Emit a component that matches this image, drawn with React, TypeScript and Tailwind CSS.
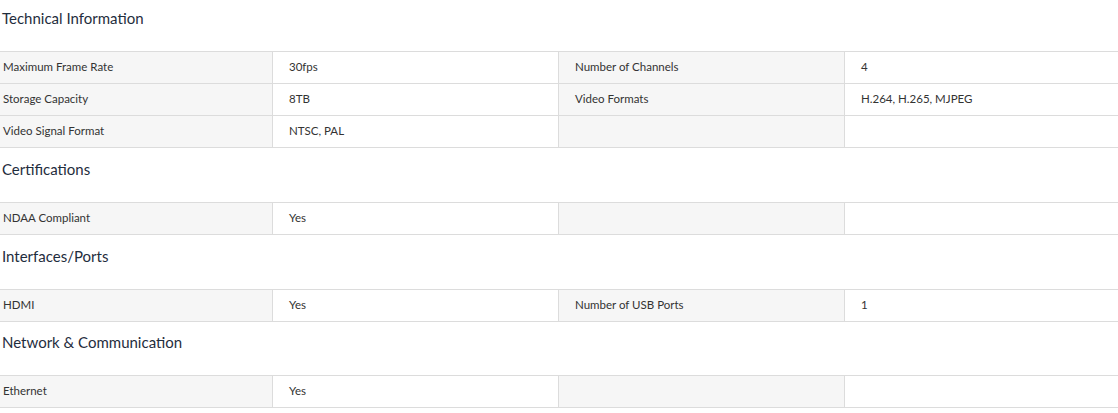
type Row = [string, string, string?, string?];

const sections: { title: string; rows: Row[] }[] = [
  {
    title: 'Technical Information',
    rows: [
      ['Maximum Frame Rate', '30fps', 'Number of Channels', '4'],
      ['Storage Capacity', '8TB', 'Video Formats', 'H.264, H.265, MJPEG'],
      ['Video Signal Format', 'NTSC, PAL'],
    ],
  },
  { title: 'Certifications', rows: [['NDAA Compliant', 'Yes']] },
  {
    title: 'Interfaces/Ports',
    rows: [['HDMI', 'Yes', 'Number of USB Ports', '1']],
  },
  { title: 'Network & Communication', rows: [['Ethernet', 'Yes']] },
];

const SpecRow = ({ row }: { row: Row }) => (
  <div className="grid grid-cols-[272px_286px_286px_1fr] h-[32px] border-b border-[#dcdcdc] text-[11.5px] text-[#333]">
    <div className="flex items-center bg-[#f6f6f6] pl-[3px] pb-px">{row[0]}</div>
    <div className="flex items-center pl-[16px] pb-px border-l border-[#dcdcdc]">{row[1]}</div>
    <div className="flex items-center bg-[#f6f6f6] pl-[16px] pb-px border-l border-[#dcdcdc]">{row[2] ?? ''}</div>
    <div className="flex items-center pl-[16px] pb-px border-l border-[#dcdcdc]">{row[3] ?? ''}</div>
  </div>
);

export default function App() {
  return (
    <div className="w-[1118px] bg-white font-['Lato',sans-serif]">
      {sections.map((s, i) => (
        <section
          key={s.title}
          className={i === 0 ? 'pt-[7px]' : i === 3 ? 'pt-[9px]' : 'pt-[10px]'}
        >
          <h2 className="pl-[2px] text-[15px] leading-[22px] text-[#1f2d3d] mb-[22px]">{s.title}</h2>
          <div className="border-t border-[#dcdcdc]">
            {s.rows.map((r, j) => (
              <SpecRow key={j} row={r} />
            ))}
          </div>
        </section>
      ))}
    </div>
  );
}
